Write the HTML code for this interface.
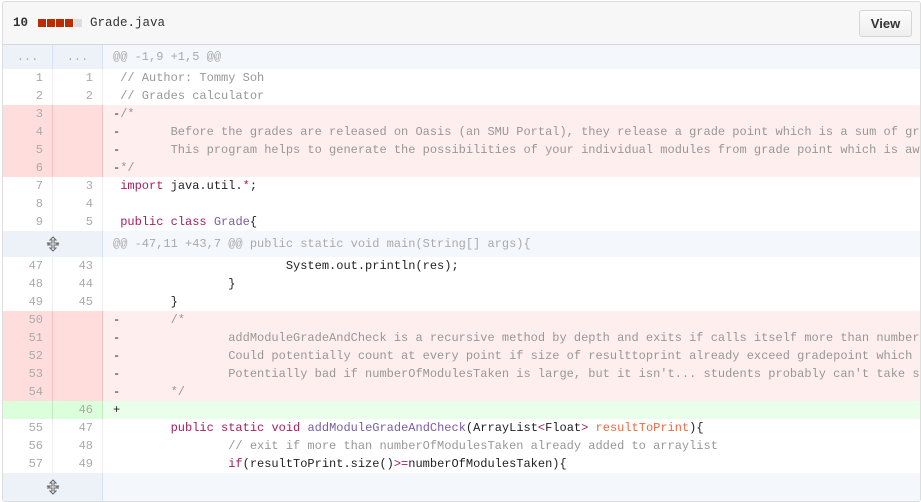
<!DOCTYPE html>
<html><head><style>
body{margin:0;background:#fff;width:921px;height:501px;overflow:hidden;font-family:"Liberation Mono",monospace;}
.box{position:absolute;left:2px;top:1px;width:917px;height:499px;border:1px solid #ddd;border-radius:3px;overflow:hidden;}
.hd{height:42px;background:#f7f7f7;border-bottom:1px solid #d8d8d8;position:relative;font-size:12.5px;color:#333;}
.hd .n{position:absolute;left:10px;top:14px;font-weight:bold;}
.hd .bar{position:absolute;left:35px;top:17px;}
.hd .bar i{display:inline-block;width:8px;height:8px;background:#bd2c00;margin-right:1px;vertical-align:top}
.hd .bar i.g{background:#ddd}
.hd .f{position:absolute;left:87px;top:14px;}
.btn{position:absolute;right:8px;top:8px;width:51px;height:25px;border:1px solid #d5d5d5;border-radius:3px;background:linear-gradient(#fcfcfc,#eee);font-family:"Liberation Sans",sans-serif;font-weight:bold;font-size:13px;line-height:25px;text-align:center;color:#333;}
.r{display:flex;height:18px;line-height:18px;font-size:12px;}
.g1,.g2{width:50px;flex:none;text-align:right;color:#aaa;border-right:1px solid #eee;box-sizing:border-box;padding-right:9px;}
.c{flex:1;white-space:pre;tab-size:8;-moz-tab-size:8;color:#222;padding-left:10px;overflow:hidden}
.hk{height:24px;line-height:24px;background:#f4f7fb;}
.hk .g1,.hk .g2{background:#edf2f9;border-color:#d5e2f3;text-align:center;padding:0;color:#aab}
.hk .c{color:#aaa;background:#f4f7fb}
.h2{height:26px;line-height:26px}
.del .g1,.del .g2{background:#ffdddd;border-color:#f1c0c0}
.del .c{background:#ffeeee}
.add .g1,.add .g2{background:#dbffdb;border-color:#c1e9c1}
.add .c{background:#eaffea}
.k{color:#a71d5d}.cm{color:#969896}.fn{color:#795da3}.v{color:#ed6a43}.o{color:#a71d5d}
.ex{width:100px;background:#edf2f9;border-right:1px solid #d5e2f3;box-sizing:border-box;flex:none;display:flex;align-items:center;justify-content:center}
</style></head><body>
<div class="box">
<div class="hd"><span class="n">10</span><span class="bar"><i></i><i></i><i></i><i></i><i class="g"></i></span><span class="f">Grade.java</span><div class="btn">View</div></div>
<div class="r hk"><div class="g1">...</div><div class="g2">...</div><div class="c">@@ -1,9 +1,5 @@</div></div>
<div class="r"><div class="g1">1</div><div class="g2">1</div><div class="c"> <span class="cm">// Author: Tommy Soh</span></div></div>
<div class="r"><div class="g1">2</div><div class="g2">2</div><div class="c"> <span class="cm">// Grades calculator</span></div></div>
<div class="r del"><div class="g1">3</div><div class="g2"></div><div class="c">-<span class="cm">/*</span></div></div>
<div class="r del"><div class="g1">4</div><div class="g2"></div><div class="c">-<span class="cm">	Before the grades are released on Oasis (an SMU Portal), they release a grade point which is a sum of grades</span></div></div>
<div class="r del"><div class="g1">5</div><div class="g2"></div><div class="c">-<span class="cm">	This program helps to generate the possibilities of your individual modules from grade point which is aware</span></div></div>
<div class="r del"><div class="g1">6</div><div class="g2"></div><div class="c">-<span class="cm">*/</span></div></div>
<div class="r"><div class="g1">7</div><div class="g2">3</div><div class="c"> <span class="k">import</span> java.util.<span class="o">*</span>;</div></div>
<div class="r"><div class="g1">8</div><div class="g2">4</div><div class="c"> </div></div>
<div class="r"><div class="g1">9</div><div class="g2">5</div><div class="c"> <span class="k">public</span> <span class="k">class</span> <span class="fn">Grade</span>{</div></div>
<div class="r hk h2"><div class="ex"><svg width="14" height="16" viewBox="0 0 14 16"><path d="M7 1L4 4h2v3H1l2 1-2 1h5v3H4l3 3 3-3H8V9h5l-2-1 2-1H8V4h2z" fill="none" stroke="#666" stroke-width="1"/></svg></div><div class="c">@@ -47,11 +43,7 @@ public static void main(String[] args){</div></div>
<div class="r"><div class="g1">47</div><div class="g2">43</div><div class="c"> 			System.out.println(res);</div></div>
<div class="r"><div class="g1">48</div><div class="g2">44</div><div class="c"> 		}</div></div>
<div class="r"><div class="g1">49</div><div class="g2">45</div><div class="c"> 	}</div></div>
<div class="r del"><div class="g1">50</div><div class="g2"></div><div class="c">-	<span class="cm">/*</span></div></div>
<div class="r del"><div class="g1">51</div><div class="g2"></div><div class="c">-<span class="cm">		addModuleGradeAndCheck is a recursive method by depth and exits if calls itself more than numberOfM</span></div></div>
<div class="r del"><div class="g1">52</div><div class="g2"></div><div class="c">-<span class="cm">		Could potentially count at every point if size of resulttoprint already exceed gradepoint which is</span></div></div>
<div class="r del"><div class="g1">53</div><div class="g2"></div><div class="c">-<span class="cm">		Potentially bad if numberOfModulesTaken is large, but it isn't... students probably can't take six</span></div></div>
<div class="r del"><div class="g1">54</div><div class="g2"></div><div class="c">-<span class="cm">	*/</span></div></div>
<div class="r add"><div class="g1"></div><div class="g2">46</div><div class="c">+</div></div>
<div class="r"><div class="g1">55</div><div class="g2">47</div><div class="c"> 	<span class="k">public</span> <span class="k">static</span> <span class="k">void</span> <span class="fn">addModuleGradeAndCheck</span>(ArrayList<span class="o">&lt;</span>Float<span class="o">&gt;</span> <span class="v">resultToPrint</span>){</div></div>
<div class="r"><div class="g1">56</div><div class="g2">48</div><div class="c"> 		<span class="cm">// exit if more than numberOfModulesTaken already added to arraylist</span></div></div>
<div class="r"><div class="g1">57</div><div class="g2">49</div><div class="c"> 		<span class="k">if</span>(resultToPrint.size()<span class="o">&gt;=</span>numberOfModulesTaken){</div></div>
<div class="r hk" style="height:28px;line-height:28px"><div class="ex"><svg width="14" height="16" viewBox="0 0 14 16"><path d="M7 1L4 4h2v3H1l2 1-2 1h5v3H4l3 3 3-3H8V9h5l-2-1 2-1H8V4h2z" fill="none" stroke="#666" stroke-width="1"/></svg></div><div class="c"></div></div>
</div>
</body></html>
